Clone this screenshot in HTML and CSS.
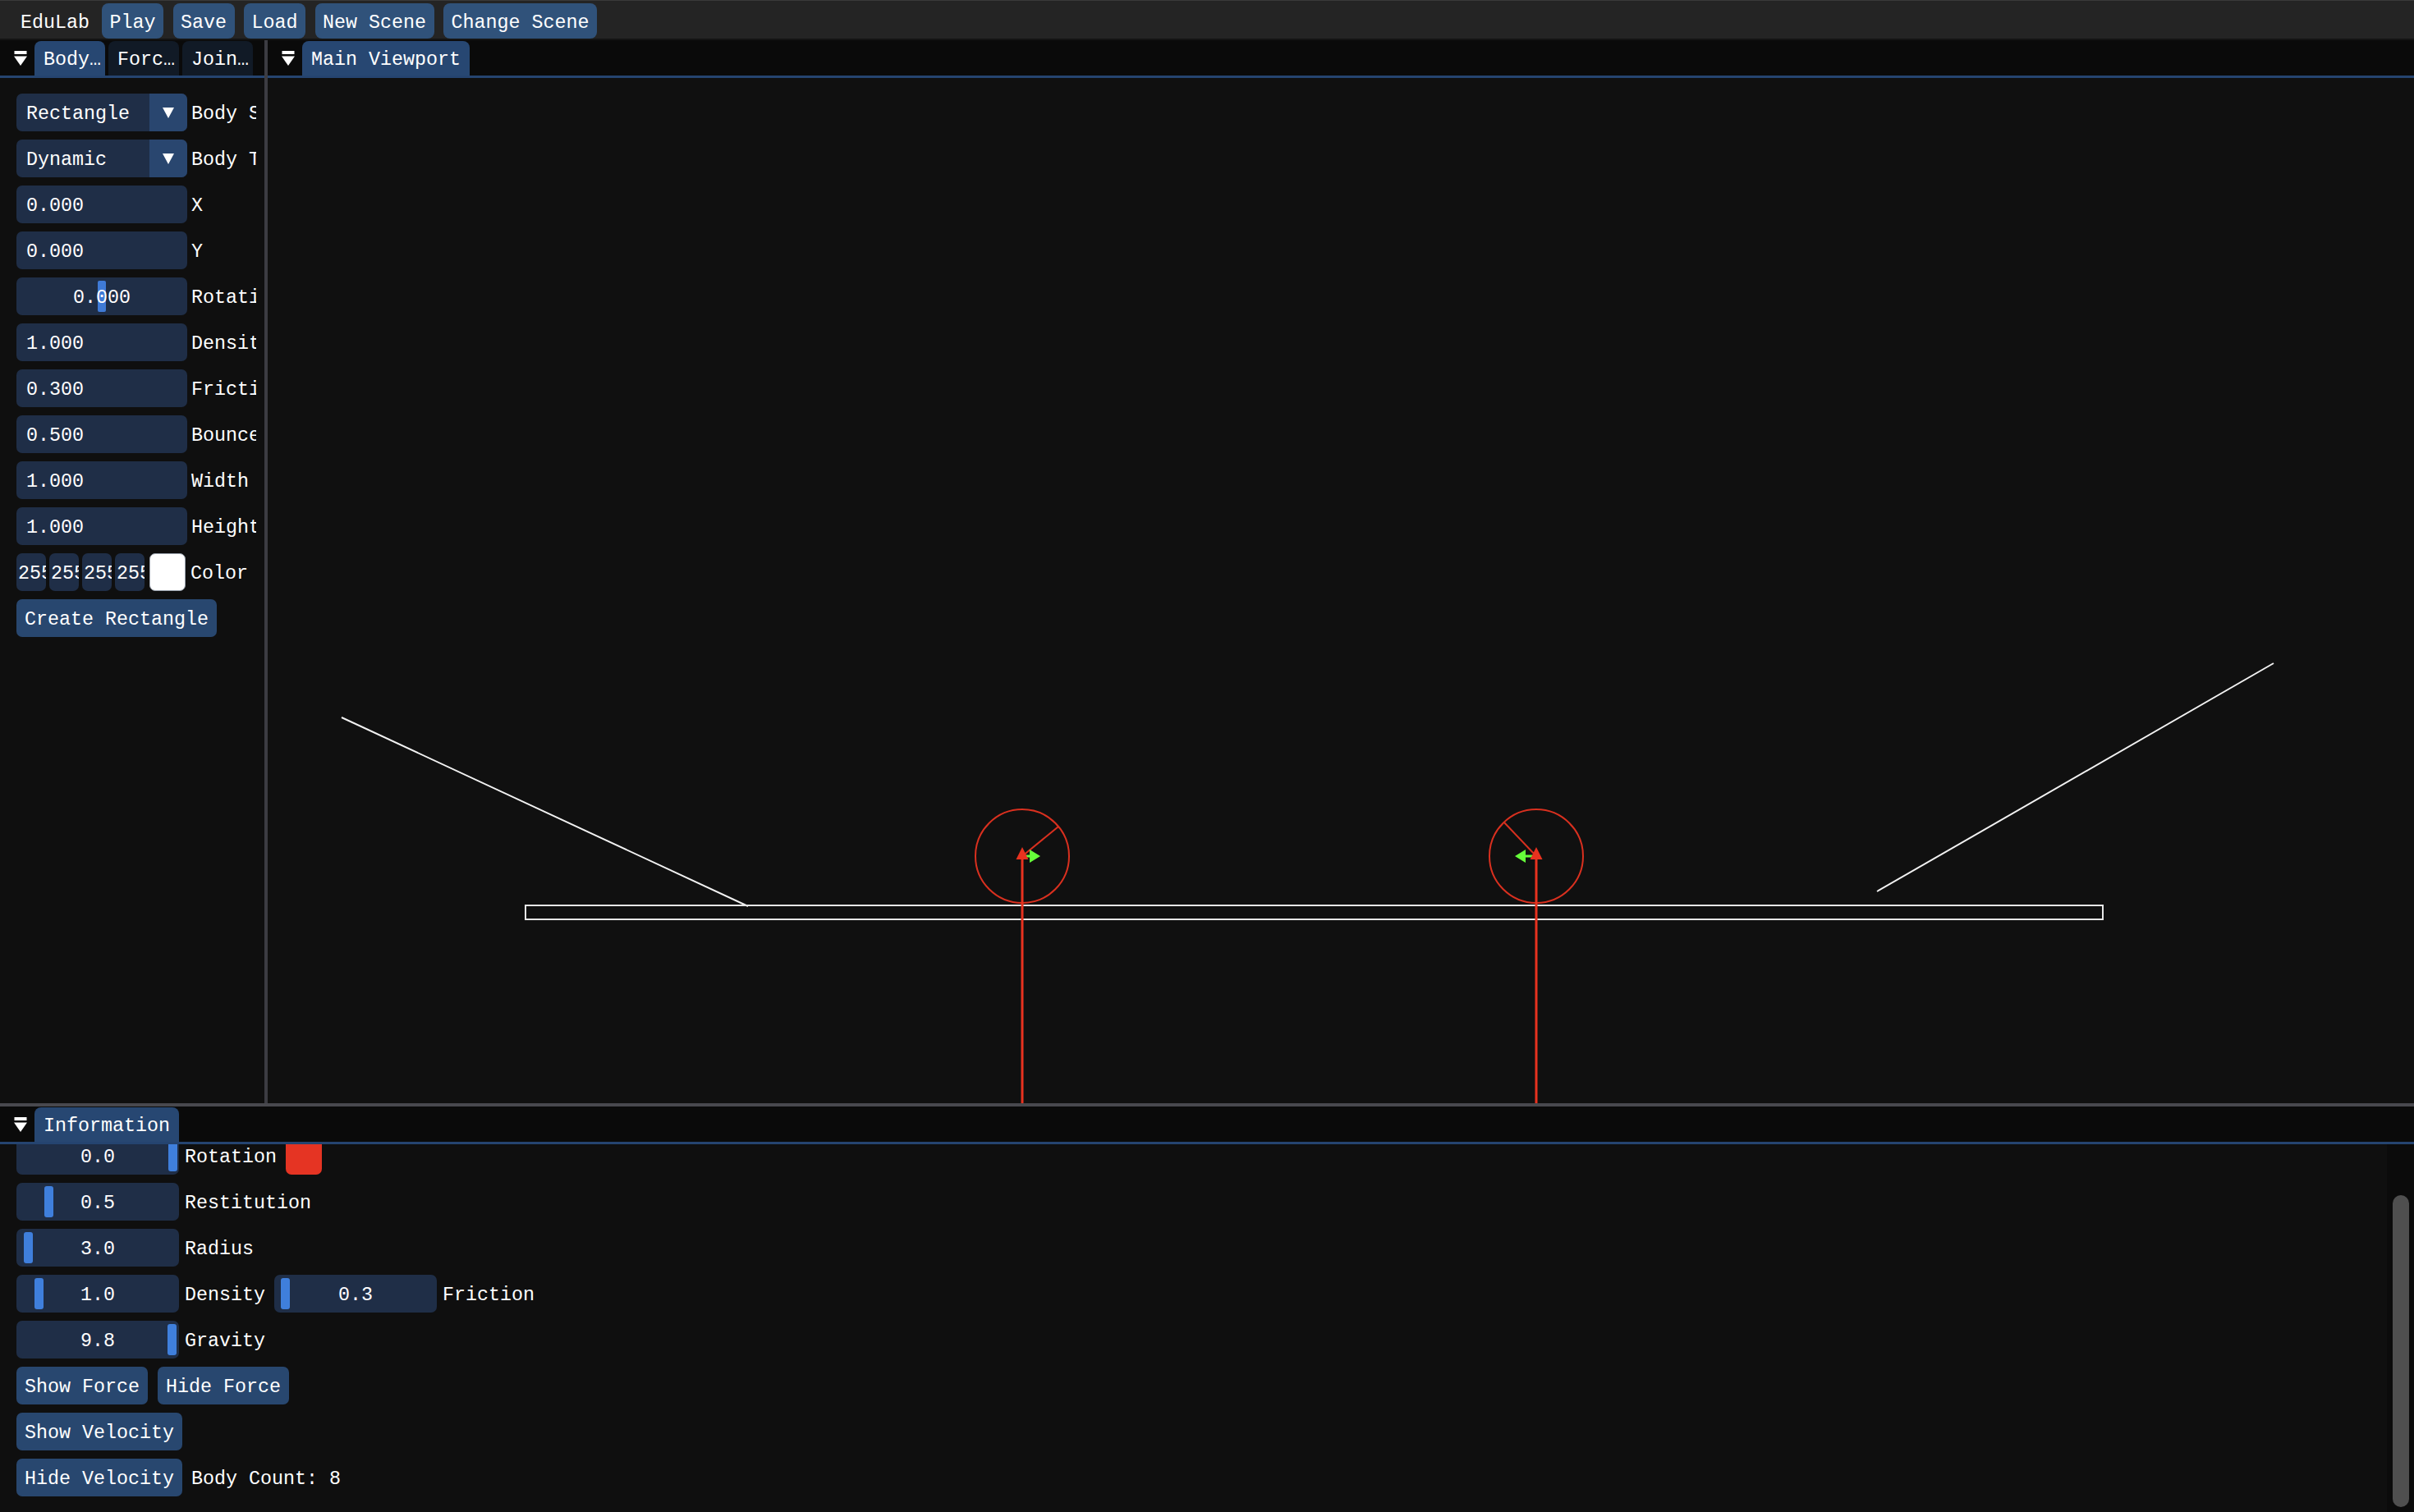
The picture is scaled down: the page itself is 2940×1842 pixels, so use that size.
FILE: index.html
```html
<!DOCTYPE html>
<html>
<head>
<meta charset="utf-8">
<title>EduLab</title>
<link rel="stylesheet" href="styles.css">
</head>
<body>
<div class="app">
  <div class="menubar">
    <span class="menu-title">EduLab</span>
    <span class="mbtn">Play</span>
    <span class="mbtn">Save</span>
    <span class="mbtn">Load</span>
    <span class="mbtn">New Scene</span>
    <span class="mbtn">Change Scene</span>
  </div>

  <div class="main">
    <div class="left">
      <div class="tabbar">
        <svg class="wicon" width="16" height="18" viewBox="0 0 16 18"><rect x="0.5" y="0" width="15" height="4" fill="#fff"/><path d="M0 6.5 H16 L8 18 Z" fill="#fff"/></svg>
        <div class="tab tab-fixed active">Body…</div>
        <div class="tab tab-fixed">Forc…</div>
        <div class="tab tab-fixed">Join…</div>
      </div>
      <div class="left-content">
        <div class="row">
          <div class="frame combo"><span class="ctext">Rectangle</span><span class="carrow"><svg width="14" height="13" viewBox="0 0 14 13"><path d="M0 0 H14 L7 13 Z" fill="#fff"/></svg></span></div>
          <span class="lbl">Body Shape</span>
        </div>
        <div class="row">
          <div class="frame combo"><span class="ctext">Dynamic</span><span class="carrow"><svg width="14" height="13" viewBox="0 0 14 13"><path d="M0 0 H14 L7 13 Z" fill="#fff"/></svg></span></div>
          <span class="lbl">Body Type</span>
        </div>
        <div class="row"><div class="frame input">0.000</div><span class="lbl">X</span></div>
        <div class="row"><div class="frame input">0.000</div><span class="lbl">Y</span></div>
        <div class="row"><div class="frame input centered"><span class="sel"></span><span class="ftext">0.000</span></div><span class="lbl">Rotation</span></div>
        <div class="row"><div class="frame input">1.000</div><span class="lbl">Density</span></div>
        <div class="row"><div class="frame input">0.300</div><span class="lbl">Friction</span></div>
        <div class="row"><div class="frame input">0.500</div><span class="lbl">Bounce</span></div>
        <div class="row"><div class="frame input">1.000</div><span class="lbl">Width</span></div>
        <div class="row"><div class="frame input">1.000</div><span class="lbl">Height</span></div>
        <div class="row">
          <div class="colorset">
            <div class="frame mini">255</div>
            <div class="frame mini">255</div>
            <div class="frame mini">255</div>
            <div class="frame mini">255</div>
            <div class="swatch white"></div>
          </div>
          <span class="lbl lbl-color">Color</span>
        </div>
        <div class="row"><span class="btn">Create Rectangle</span></div>
      </div>
    </div>

    <div class="vsplit"></div>

    <div class="viewport">
      <div class="tabbar">
        <svg class="wicon" width="16" height="18" viewBox="0 0 16 18"><rect x="0.5" y="0" width="15" height="4" fill="#fff"/><path d="M0 6.5 H16 L8 18 Z" fill="#fff"/></svg>
        <div class="tab active">Main Viewport</div>
      </div>
      <div class="canvas">
        <svg class="scene" width="2614" height="1249" viewBox="326 95 2614 1249">
          <line x1="416" y1="874" x2="911" y2="1104" stroke="#f2f2f2" stroke-width="2"/>
          <line x1="2286" y1="1086" x2="2769" y2="808" stroke="#f2f2f2" stroke-width="2"/>
          <rect x="640" y="1103" width="1921" height="17" fill="none" stroke="#e6e6e6" stroke-width="2"/>

          <circle cx="1245" cy="1043" r="57" fill="none" stroke="#d9301f" stroke-width="2"/>
          <line x1="1245" y1="1043" x2="1289" y2="1007" stroke="#d9301f" stroke-width="2"/>
          <circle cx="1871" cy="1043" r="57" fill="none" stroke="#d9301f" stroke-width="2"/>
          <line x1="1871" y1="1043" x2="1832" y2="1002" stroke="#d9301f" stroke-width="2"/>

          <line x1="1245" y1="1043" x2="1255" y2="1043" stroke="#66ff3a" stroke-width="3"/>
          <path d="M1254 1035 L1267 1043 L1254 1051 Z" fill="#66ff3a"/>
          <line x1="1858" y1="1043" x2="1871" y2="1043" stroke="#66ff3a" stroke-width="3"/>
          <path d="M1858 1035 L1845 1043 L1858 1051 Z" fill="#66ff3a"/>

          <line x1="1245" y1="1045" x2="1245" y2="1344" stroke="#e8321f" stroke-width="3"/>
          <path d="M1245 1032 L1252.5 1047 L1237.5 1047 Z" fill="#e8321f"/>
          <line x1="1871" y1="1045" x2="1871" y2="1344" stroke="#e8321f" stroke-width="3"/>
          <path d="M1871 1032 L1878.5 1047 L1863.5 1047 Z" fill="#e8321f"/>
        </svg>
      </div>
    </div>
  </div>

  <div class="hsplit"></div>

  <div class="bottom">
    <div class="tabbar">
      <svg class="wicon" width="16" height="18" viewBox="0 0 16 18"><rect x="0.5" y="0" width="15" height="4" fill="#fff"/><path d="M0 6.5 H16 L8 18 Z" fill="#fff"/></svg>
      <div class="tab active">Information</div>
    </div>
    <div class="bottom-body">
      <div class="bottom-clip">
        <div class="bottom-content">
          <div class="brow">
            <div class="frame slider"><span class="grab" style="left:185px"></span>0.0</div>
            <span class="blbl">Rotation</span>
            <div class="swatch red"></div>
          </div>
          <div class="brow">
            <div class="frame slider"><span class="grab" style="left:34px"></span>0.5</div>
            <span class="blbl">Restitution</span>
          </div>
          <div class="brow">
            <div class="frame slider"><span class="grab" style="left:9px"></span>3.0</div>
            <span class="blbl">Radius</span>
          </div>
          <div class="brow">
            <div class="frame slider"><span class="grab" style="left:22px"></span>1.0</div>
            <span class="blbl">Density</span>
            <div class="frame slider"><span class="grab" style="left:8px"></span>0.3</div>
            <span class="blbl">Friction</span>
          </div>
          <div class="brow">
            <div class="frame slider"><span class="grab" style="left:184px"></span>9.8</div>
            <span class="blbl">Gravity</span>
          </div>
          <div class="brow">
            <span class="btn">Show Force</span>
            <span class="btn">Hide Force</span>
          </div>
          <div class="brow">
            <span class="btn">Show Velocity</span>
          </div>
          <div class="brow">
            <span class="btn">Hide Velocity</span>
            <span class="plain">Body Count: 8</span>
          </div>
        </div>
      </div>
      <div class="scrollbar"><div class="thumb"></div></div>
    </div>
  </div>
</div>
</body>
</html>
```

FILE: styles.css
```css
* {
  box-sizing: border-box;
  margin: 0;
  padding: 0;
}

html, body {
  width: 2940px;
  height: 1842px;
  overflow: hidden;
  background: #0f0f0f;
}

body {
  font-family: "Liberation Mono", "DejaVu Sans Mono", monospace;
  font-size: 23.33px;
  line-height: 26px;
  color: #ffffff;
  white-space: nowrap;
}

.app {
  display: flex;
  flex-direction: column;
  width: 2940px;
  height: 1842px;
}

/* ---------- menu bar ---------- */
.menubar {
  flex: none;
  height: 49px;
  display: flex;
  align-items: flex-start;
  gap: 11.5px;
  padding: 3px 0 0 25px;
  background: #242424;
  border-top: 1px solid #3a3a3a;
  border-bottom: 2px solid #141414;
}

.menu-title {
  height: 43px;
  display: flex;
  align-items: center;
  padding-top: 4px;
  margin-right: 3.5px;
}

.mbtn {
  height: 43px;
  display: flex;
  align-items: center;
  padding: 4px 9.5px 0;
  border-radius: 8px;
  background: #30527a;
}

/* ---------- main area ---------- */
.main {
  flex: none;
  height: 1295px;
  display: flex;
}

.left {
  flex: none;
  width: 322px;
  display: flex;
  flex-direction: column;
  background: #0f0f0f;
}

.vsplit {
  flex: none;
  width: 4px;
  background: #3c3c42;
}

.viewport {
  flex: 1;
  display: flex;
  flex-direction: column;
}

.canvas {
  flex: 1;
  background: #101010;
  overflow: hidden;
}

.scene {
  display: block;
}

/* ---------- tab bars ---------- */
.tabbar {
  flex: none;
  height: 46px;
  display: flex;
  align-items: center;
  gap: 4px;
  padding: 1px 0 0 17px;
  background: #0a0a0a;
  border-bottom: 3px solid #254470;
}

.wicon {
  flex: none;
  margin-right: 5px;
}

.tab {
  height: 42px;
  display: flex;
  align-items: center;
  padding: 4px 11px 0;
  border-radius: 8px 8px 0 0;
  background: #111a26;
  overflow: hidden;
}

.tab-fixed {
  width: 86px;
}

.tab.active {
  background: #274772;
}

/* ---------- left panel content ---------- */
.left-content {
  width: 312px;
  overflow: hidden;
  display: flex;
  flex-direction: column;
  gap: 10px;
  padding: 19px 0 0 20px;
}

.row {
  display: flex;
  align-items: center;
  height: 46px;
}

.frame {
  flex: none;
  height: 46px;
  display: flex;
  align-items: center;
  padding-top: 4px;
  border-radius: 7px;
  background: #1f2e47;
}

.input {
  width: 208px;
  padding-left: 12px;
  padding-right: 12px;
}

.input.centered {
  position: relative;
  justify-content: center;
}

.sel {
  position: absolute;
  left: 99px;
  top: 4px;
  width: 10px;
  height: 38px;
  border-radius: 2px;
  background: #3f7ad6;
}

.ftext {
  position: relative;
}

.combo {
  width: 208px;
  overflow: hidden;
  padding-top: 0;
}

.ctext {
  flex: 1;
  padding-left: 12px;
  padding-top: 4px;
}

.carrow {
  flex: none;
  width: 46px;
  height: 46px;
  display: flex;
  align-items: center;
  justify-content: center;
  background: #29466f;
}

.lbl {
  position: relative;
  top: 2px;
  margin-left: 5px;
}

.colorset {
  display: flex;
  gap: 4px;
}

.mini {
  width: 36px;
  padding-left: 2px;
  overflow: hidden;
}

.swatch {
  flex: none;
  width: 44px;
  height: 46px;
  border-radius: 7px;
}

.swatch.white {
  margin-left: 2px;
  background: #ffffff;
  border: 1px solid #9aa2ad;
}

.lbl-color {
  margin-left: 6px;
}

.btn {
  flex: none;
  height: 46px;
  display: flex;
  align-items: center;
  padding: 4px 10px 0;
  border-radius: 7px;
  background: #28476f;
}

/* ---------- bottom panel ---------- */
.hsplit {
  flex: none;
  height: 4px;
  background: #48484e;
}

.bottom {
  flex: 1;
  display: flex;
  flex-direction: column;
  background: #0f0f0f;
}

.bottom-body {
  flex: 1;
  display: flex;
  overflow: hidden;
}

.bottom-clip {
  flex: 1;
  overflow: hidden;
}

.bottom-content {
  display: flex;
  flex-direction: column;
  gap: 10px;
  margin-top: -9px;
  padding-left: 20px;
}

.brow {
  display: flex;
  align-items: center;
  height: 46px;
}

.slider {
  position: relative;
  width: 198px;
  justify-content: center;
}

.grab {
  position: absolute;
  top: 4px;
  width: 11px;
  height: 38px;
  border-radius: 3px;
  background: #3f7fdc;
}

.blbl {
  position: relative;
  top: 2px;
  margin: 0 11px 0 7px;
}

.swatch.red {
  background: #e53423;
}

.brow .btn + .btn {
  margin-left: 12px;
}

.plain {
  position: relative;
  top: 2px;
  margin-left: 11px;
}

.scrollbar {
  flex: none;
  width: 33px;
  display: flex;
  flex-direction: column;
  padding: 62px 6px 6px 7px;
  background: #0b0b0b;
}

.thumb {
  flex: 1;
  border-radius: 10px;
  background: #4f4f4f;
}
```
